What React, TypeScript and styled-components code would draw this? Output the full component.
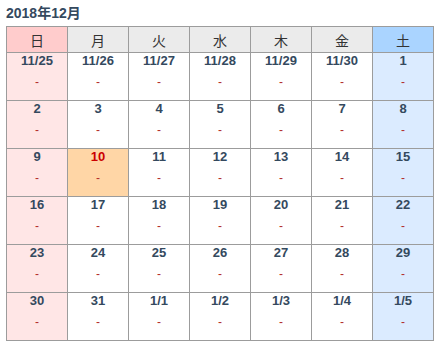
import React from "react";
import styled, { createGlobalStyle, css } from "styled-components";

const GlobalStyle = createGlobalStyle`
  html, body {
    margin: 0;
    padding: 0;
    background: #fff;
  }
  body {
    padding: 6px;
    font-family: "Liberation Sans", Arial, "Noto Sans CJK JP", sans-serif;
  }
`;

type DayKind = "sun" | "sat" | "week";

const Title = styled.h2`
  margin: 0;
  height: 20px;
  font-size: 14px;
  line-height: 14px;
  font-weight: bold;
  color: #34495e;
`;

const Table = styled.table`
  border-collapse: collapse;
  table-layout: fixed;
  width: 428px;
`;

const HeadCell = styled.th<{ $kind: DayKind }>`
  width: 60px;
  height: 25px;
  padding: 0;
  border: 1px solid #9c9c9c;
  background: #ebebeb;
  color: #333;
  font-size: 14px;
  font-weight: normal;
  text-align: center;

  ${(p) =>
    p.$kind === "sun" &&
    css`
      background: #ffcccc;
    `}
  ${(p) =>
    p.$kind === "sat" &&
    css`
      background: #aad4ff;
    `}
`;

const DayCell = styled.td<{ $kind: DayKind; $today?: boolean }>`
  height: 47px;
  padding: 0;
  border: 1px solid #9c9c9c;
  vertical-align: top;
  text-align: center;
  background: #fff;

  ${(p) =>
    p.$kind === "sun" &&
    css`
      background: #ffe6e6;
    `}
  ${(p) =>
    p.$kind === "sat" &&
    css`
      background: #dbebff;
    `}
  ${(p) =>
    p.$today &&
    css`
      background: #ffd6a6;
    `}
`;

const DateLabel = styled.div<{ $today?: boolean }>`
  font-size: 13px;
  line-height: 16px;
  font-weight: bold;
  color: ${(p) => (p.$today ? "#cc0000" : "#34495e")};
`;

const Mark = styled.div`
  margin-top: 6px;
  font-size: 12px;
  line-height: 14px;
  color: #b32d2d;
`;

const weekdays = ["日", "月", "火", "水", "木", "金", "土"];

const weeks: string[][] = [
  ["11/25", "11/26", "11/27", "11/28", "11/29", "11/30", "1"],
  ["2", "3", "4", "5", "6", "7", "8"],
  ["9", "10", "11", "12", "13", "14", "15"],
  ["16", "17", "18", "19", "20", "21", "22"],
  ["23", "24", "25", "26", "27", "28", "29"],
  ["30", "31", "1/1", "1/2", "1/3", "1/4", "1/5"],
];

const kindOf = (i: number): DayKind => (i === 0 ? "sun" : i === 6 ? "sat" : "week");

export default function App() {
  return (
    <>
      <GlobalStyle />
      <Title>2018年12月</Title>
      <Table>
        <thead>
          <tr>
            {weekdays.map((d, i) => (
              <HeadCell key={d} $kind={kindOf(i)}>
                {d}
              </HeadCell>
            ))}
          </tr>
        </thead>
        <tbody>
          {weeks.map((week, w) => (
            <tr key={w}>
              {week.map((day, i) => {
                const today = w === 2 && day === "10";
                return (
                  <DayCell key={day} $kind={kindOf(i)} $today={today}>
                    <DateLabel $today={today}>{day}</DateLabel>
                    <Mark>-</Mark>
                  </DayCell>
                );
              })}
            </tr>
          ))}
        </tbody>
      </Table>
    </>
  );
}
